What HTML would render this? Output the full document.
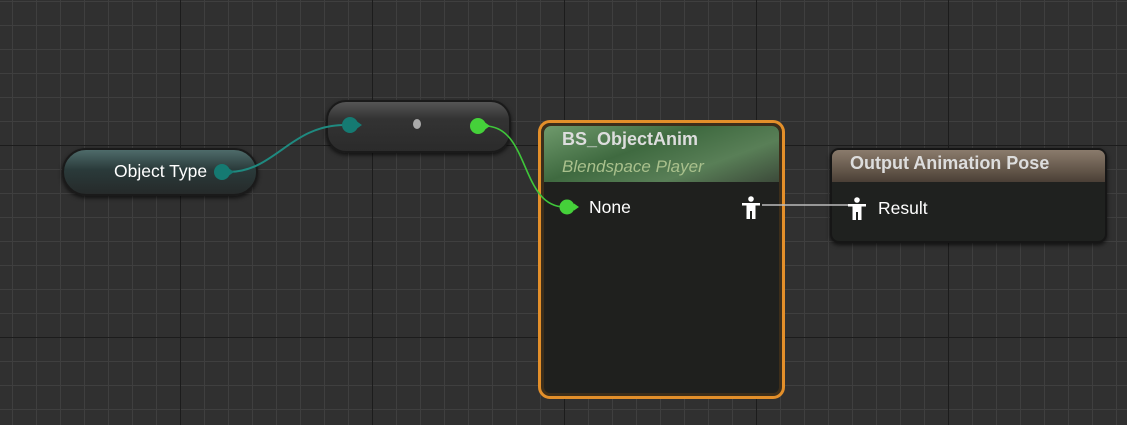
<!DOCTYPE html>
<html><head><style>
body{margin:0;width:1127px;height:425px;overflow:hidden;background:#303030;font-family:"Liberation Sans",sans-serif;position:relative}
.grid{position:absolute;inset:0;background-image:
linear-gradient(to right,#1c1c1c 0 1px,transparent 1px),
linear-gradient(to bottom,#1c1c1c 0 1px,transparent 1px),
linear-gradient(to right,#3f3f3f 0 1px,transparent 1px),
linear-gradient(to bottom,#3f3f3f 0 1px,transparent 1px);
background-size:192px 192px,192px 192px,24px 24px,24px 24px;
background-position:180px 0,0 145px,12px 0,0 1px}
.n{position:absolute;box-sizing:border-box}
.t{position:absolute;color:#fff;white-space:nowrap}
</style></head><body>
<div class="grid"></div>
<div class="n" style="left:62px;top:148px;width:196px;height:48px;border-radius:24px;border:2px solid #1a1a1a;background:linear-gradient(180deg,#4e6b6a 0%,#2a3a3a 45%,#262a2a 100%);box-shadow:0 2px 4px #000a"></div>
<div class="t" style="left:114px;top:161px;font-size:17.5px">Object Type</div>
<div class="n" style="left:326px;top:100px;width:185px;height:53px;border-radius:20px;border:2px solid #1a1a1a;background:linear-gradient(180deg,#555 0%,#333 35%,#2b2b2b 100%);box-shadow:0 2px 4px #000a"></div>
<div class="n" style="left:538px;top:120px;width:247px;height:279px;border-radius:12px;border:3px solid #e38f2a;background:#1f201e;box-shadow:inset 0 0 0 3px #3d2e1a"></div>
<div class="n" style="left:544px;top:126px;width:235px;height:56px;border-radius:7px 7px 0 0;background:linear-gradient(160deg,#6f9a6c 0%,#3f6a40 40%,#597f57 70%,#3c4a3a 100%)"></div>
<div class="t" style="left:562px;top:129px;font-size:18px;font-weight:bold;color:#ddd">BS_ObjectAnim</div>
<div class="t" style="left:562px;top:157px;font-size:17px;font-style:italic;color:#a9c08c">Blendspace Player</div>
<div class="t" style="left:589px;top:197px;font-size:17.5px">None</div>
<div class="n" style="left:830px;top:148px;width:277px;height:95px;border-radius:9px;border:2px solid #161616;background:#1f211f;box-shadow:0 2px 4px #000a"></div>
<div class="n" style="left:832px;top:150px;width:273px;height:32px;border-radius:7px 7px 0 0;background:linear-gradient(180deg,#8a7b6c 0%,#5f5246 70%,#4a3f36 100%)"></div>
<div class="t" style="left:850px;top:153px;font-size:18px;font-weight:bold;color:#ddd">Output Animation Pose</div>
<div class="t" style="left:878px;top:198px;font-size:17.5px">Result</div>
<svg width="1127" height="425" style="position:absolute;left:0;top:0">
<path d="M228 172 C 275 172, 290 125, 345 125" stroke="#1f8a80" stroke-width="2" fill="none"/>
<path d="M485 126 C 530 126, 520 207, 565 207" stroke="#3fc63a" stroke-width="1.6" fill="none"/>
<line x1="762" y1="205" x2="848" y2="205" stroke="#bbb" stroke-width="1.5"/>
<circle cx="222" cy="172" r="8" fill="#157a72"/><path d="M229 168.5 L234 172 L229 175.5Z" fill="#157a72"/>
<circle cx="350" cy="125" r="8" fill="#157a72"/><path d="M357 121.5 L362 125 L357 128.5Z" fill="#157a72"/>
<ellipse cx="417" cy="124" rx="4" ry="5" fill="#aaa"/>
<circle cx="478" cy="126" r="8" fill="#45d13a"/><path d="M485 122.5 L490 126 L485 129.5Z" fill="#45d13a"/>
<circle cx="567" cy="207" r="7.5" fill="#45d13a"/><path d="M574 203.5 L579 207 L574 210.5Z" fill="#45d13a"/>
<g fill="#fff"><circle cx="751" cy="199" r="2.8"/><path d="M742 203 H760 V205.5 H755.5 V219 H752 V211 H750 V219 H746.5 V205.5 H742Z"/></g>
<g fill="#fff" transform="translate(106,1)"><circle cx="751" cy="199" r="2.8"/><path d="M742 203 H760 V205.5 H755.5 V219 H752 V211 H750 V219 H746.5 V205.5 H742Z"/></g>
</svg>
</body></html>
